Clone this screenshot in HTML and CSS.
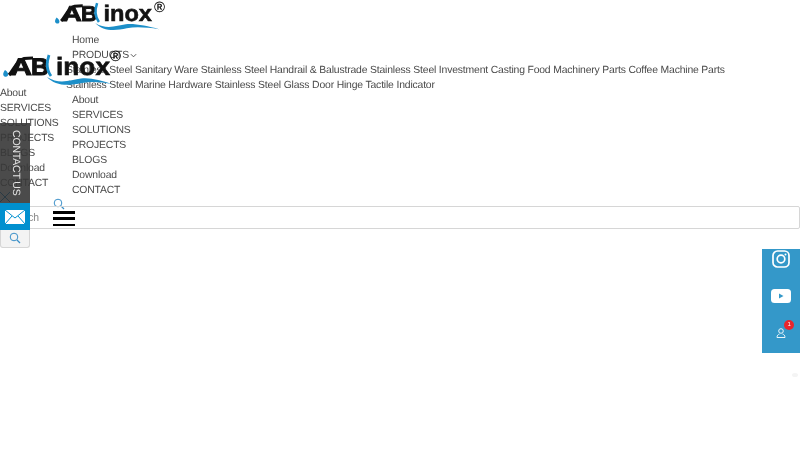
FILE: index.html
```html
<!DOCTYPE html>
<html lang="en">
<head>
<meta charset="utf-8">
<title>ABlinox</title>
<link rel="stylesheet" href="styles.css">
</head>
<body>
<header class="header">
  <a class="logo logo-main" href="#">
    <svg viewBox="0 0 110 32" width="99" height="29">
      <path d="M3 24c-2 3-2.500 5-.5 6.500 2.800 1 4.200-1 3.500-3-.5-1.500-1.500-2.500-3-3.500z" transform="translate(1 -8)" fill="#1c8fc9"/>
      <path d="M9 20c4-4 8-15 15-16.500 3-.5 6-.5 9-.5" fill="none" stroke="#111" stroke-width="3.200"/>
      <text class="logo-a" x="10" y="20" textLength="22" lengthAdjust="spacingAndGlyphs">A</text>
      <text class="logo-b" x="31" y="20" textLength="18" lengthAdjust="spacingAndGlyphs">B</text>
      <path d="M49 0c-2.500 7-2.500 15 2 21" fill="none" stroke="#1c8fc9" stroke-width="2.800"/>
      <text class="logo-inox" x="56" y="20" textLength="54" lengthAdjust="spacingAndGlyphs">inox</text>
      <path d="M47 22c12 8 24 3 34 1.500 10-1 24 2 37 5.500-14-2-26-3-36-1-14 3-27 3-35-6z" fill="#1c8fc9"/>
    </svg>
    <span class="reg reg-main">®</span>
  </a>
  <nav class="nav-main">
    <ul class="menu">
      <li>Home</li>
      <li class="has-sub">PRODUCTS<svg class="chev" viewBox="0 0 8 5" width="7" height="5"><path d="M1 1l3 3 3-3" fill="none" stroke="#444" stroke-width="1"/></svg></li>
    </ul>
    <p class="submenu">Stainless Steel Sanitary Ware Stainless Steel Handrail &amp; Balustrade Stainless Steel Investment Casting Food Machinery Parts Coffee Machine Parts Stainless Steel Marine Hardware Stainless Steel Glass Door Hinge Tactile Indicator</p>
    <ul class="menu">
      <li>About</li>
      <li>SERVICES</li>
      <li>SOLUTIONS</li>
      <li>PROJECTS</li>
      <li>BLOGS</li>
      <li>Download</li>
      <li>CONTACT</li>
    </ul>
  </nav>
  <div class="search-toggle">
    <svg viewBox="0 0 12 12" width="12" height="12"><circle cx="5" cy="5" r="3.800" fill="none" stroke="#3a8fc8" stroke-width="1"/><path d="M8 8l3 3" stroke="#3a8fc8" stroke-width="1.200"/></svg>
  </div>
  <form class="search">
    <input class="search-input" type="text" placeholder="Search">
    <button class="search-btn" type="button">
      <svg viewBox="0 0 12 12" width="12" height="12"><circle cx="5" cy="5" r="3.800" fill="none" stroke="#3a8fc8" stroke-width="1"/><path d="M8 8l3 3" stroke="#3a8fc8" stroke-width="1.200"/></svg>
    </button>
  </form>
</header>

<aside class="mobile">
  <a class="logo logo-side" href="#">
    <svg viewBox="0 0 110 32" width="110" height="32">
      <path d="M3 24c-2 3-2.500 5-.5 6.500 2.800 1 4.200-1 3.500-3-.5-1.500-1.500-2.500-3-3.500z" transform="translate(2 -9)" fill="#1c8fc9"/>
      <path d="M9 20c4-4 8-15 15-16.500 3-.5 6-.5 9-.5" fill="none" stroke="#111" stroke-width="3.200"/>
      <text class="logo-a" x="10" y="20" textLength="22" lengthAdjust="spacingAndGlyphs">A</text>
      <text class="logo-b" x="31" y="20" textLength="18" lengthAdjust="spacingAndGlyphs">B</text>
      <path d="M49 0c-2.500 7-2.500 15 2 21" fill="none" stroke="#1c8fc9" stroke-width="2.800"/>
      <text class="logo-inox" x="56" y="20" textLength="54" lengthAdjust="spacingAndGlyphs">inox</text>
      <path d="M47 22c12 8 24 3 34 1.500 10-1 20 2 31 5.500-10-2-20-3-30-1-14 3-27 3-35-6z" fill="#1c8fc9"/>
    </svg>
    <span class="reg reg-side">®</span>
  </a>
  <ul class="menu">
    <li>About</li>
    <li>SERVICES</li>
    <li>SOLUTIONS</li>
    <li>PROJECTS</li>
    <li>BLOGS</li>
    <li>Download</li>
    <li>CONTACT</li>
  </ul>
</aside>

<button class="burger" type="button" aria-label="Menu"><i></i><i></i><i></i></button>

<div class="contact-tab">
  <div class="contact-label"><span>CONTACT US</span></div>
  <svg class="contact-close" viewBox="0 0 12 12" width="12" height="12"><path d="M1 1l10 10M11 1L1 11" stroke="#2a3a44" stroke-width="1"/></svg>
  <div class="contact-mail">
    <svg viewBox="0 0 20 14" width="20" height="14"><rect width="20" height="14" fill="#fff"/><path d="M0 0l10 8 10-8M0 14l7-8M20 14l-7-8" fill="none" stroke="#0090cf" stroke-width="1"/></svg>
  </div>
</div>

<aside class="social">
  <svg viewBox="0 0 18 18" width="18" height="18"><rect x="1" y="1" width="16" height="16" rx="4.500" fill="none" stroke="#fff" stroke-width="1.700"/><circle cx="9" cy="9" r="3.800" fill="none" stroke="#fff" stroke-width="1.700"/><circle cx="13.500" cy="4.500" r="1" fill="#fff"/></svg>
  <svg class="yt" viewBox="0 0 20 14" width="20" height="14"><rect width="20" height="14" rx="3.500" fill="#fff"/><path d="M8 4.500v5l4.500-2.500z" fill="#3498c9"/></svg>
  <div class="user">
    <svg viewBox="0 0 10 10" width="10" height="10"><circle cx="5" cy="3" r="2.300" fill="none" stroke="#fff" stroke-width=".9"/><path d="M1 9.500h8M1 9.500c0-2 1-3 2.500-3.500M9 9.500c0-2-1-3-2.500-3.500" fill="none" stroke="#fff" stroke-width=".9"/></svg>
    <span class="badge">1</span>
  </div>
</aside>
<div class="corner-dot"></div>
</body>
</html>
```
FILE: styles.css
```css
* { box-sizing: border-box; }
html, body { margin: 0; padding: 0; }
body {
  width: 800px;
  height: 450px;
  overflow: hidden;
  position: relative;
  background: #fff;
  font-family: "Liberation Sans", Arial, sans-serif;
  font-size: 10.400px;
  letter-spacing: -.17px;
  line-height: 15px;
  color: #4a4a4a;
  text-rendering: geometricPrecision;
  filter: blur(.4px);
}
.menu { list-style: none; margin: 0; padding: 0; }
.menu li { height: 15px; }
.logo { display: block; position: relative; width: 110px; letter-spacing: 0; }
.logo svg { display: block; overflow: visible; }
.logo-main { margin-left: 53px; padding-top: 3px; height: 33px; }
.logo-side { height: 31px; }
.logo-a, .logo-b { font: 700 24px "Liberation Sans", sans-serif; fill: #111; stroke: #111; stroke-width: 1px; }
.logo-inox { font: 700 25px "Liberation Sans", sans-serif; fill: #111; stroke: #111; stroke-width: .6px; }
.reg { position: absolute; font-size: 15px; line-height: 15px; color: #111; font-weight: 700; }
.reg-main { left: 101px; top: 0; }
.reg-side { left: 110px; top: -6px; }
.nav-main { padding-left: 72px; }
.submenu { margin: 0 0 0 -6px; width: 665px; }
.chev { margin-left: 1px; }
.search-toggle { height: 8px; padding: 0 0 0 53px; }
.search-toggle svg, .search-btn svg { display: block; }
.search { display: flex; flex-direction: column; align-items: flex-start; }
.search-input {
  width: 800px;
  height: 23px;
  border: 1px solid #d6d6d6;
  border-radius: 2px;
  padding: 0 6px;
  font: inherit;
  letter-spacing: inherit;
  background: transparent;
}
.search-input::placeholder { color: #888; }
.search-btn {
  width: 30px;
  height: 19px;
  display: flex;
  align-items: center;
  justify-content: center;
  padding: 0;
  background: #f3f3f3;
  border: 1px solid #d6d6d6;
  border-top: 0;
  border-radius: 0 0 3px 3px;
}
.mobile { position: absolute; left: 0; top: 55px; width: 130px; }
.burger {
  position: absolute;
  left: 53px;
  top: 211px;
  width: 22px;
  height: 15px;
  padding: 0;
  border: 0;
  background: none;
  display: flex;
  flex-direction: column;
  justify-content: space-between;
}
.burger i { display: block; height: 2.500px; background: #000; }
.contact-tab { position: absolute; left: 0; top: 123px; width: 30px; height: 107px; }
.contact-label {
  height: 80px;
  background: rgba(55, 55, 55, .9);
  color: #e4e4e4;
  display: flex;
  align-items: center;
  justify-content: center;
}
.contact-label span { writing-mode: vertical-rl; white-space: nowrap; font-size: 10.500px; }
.contact-close { position: absolute; left: -1px; top: 68px; }
.contact-mail {
  height: 27px;
  background: #0090cf;
  display: flex;
  align-items: center;
  justify-content: center;
}
.social {
  position: absolute;
  left: 762px;
  top: 249px;
  width: 38px;
  height: 104px;
  background: #3498c9;
  display: flex;
  flex-direction: column;
  align-items: center;
  padding-top: 1px;
}
.yt { margin-top: 21px; }
.user { position: relative; margin-top: 25px; width: 10px; height: 10px; }
.user svg { display: block; }
.badge {
  position: absolute;
  left: 8px;
  top: -8px;
  width: 10px;
  height: 10px;
  border-radius: 50%;
  background: #e8262d;
  color: #fff;
  font-size: 6px;
  line-height: 10px;
  text-align: center;
}
.corner-dot { position: absolute; left: 792px; top: 373px; width: 6px; height: 4px; background: #f4f4f4; border-radius: 50%; }
```
